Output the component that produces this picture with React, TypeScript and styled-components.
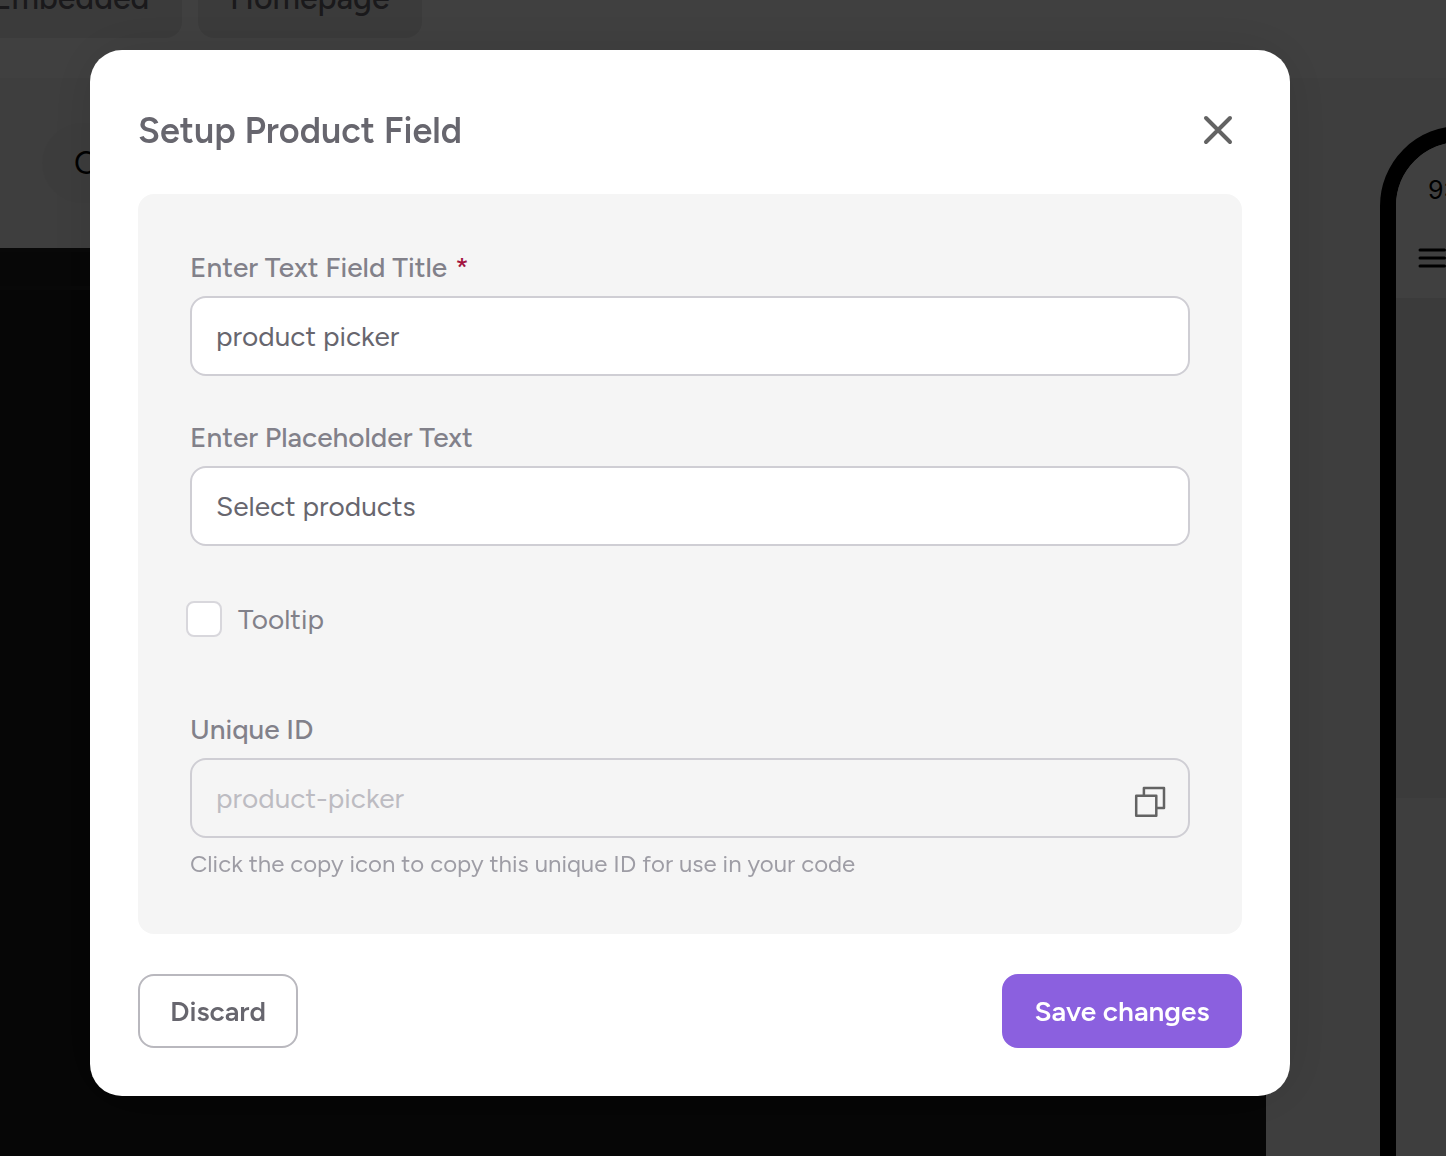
import React, { useState } from "react";
import styled, { createGlobalStyle } from "styled-components";

const GlobalStyle = createGlobalStyle`
  *, *::before, *::after { box-sizing: border-box; }
  html, body, #root { height: 100%; }
  body {
    margin: 0;
    overflow: hidden;
    font-family: Figtree, Lato, "Open Sans", sans-serif;
    color: #67666e;
  }
  button, input { font: inherit; color: inherit; }
`;

const Page = styled.div`
  height: 100vh;
  display: flex;
  flex-direction: column;
  overflow: hidden;
  background: #f5f5f5;
`;

const TopBar = styled.header`
  flex: none;
  height: 78px;
  display: flex;
  align-items: flex-end;
  gap: 16px;
  padding-bottom: 40px;
  margin-left: -40px;
  overflow: hidden;
  background: #ffffff;
`;

const Tab = styled.button`
  flex: none;
  height: 80px;
  min-width: 222px;
  padding: 0 32px;
  border: 0;
  border-radius: 16px;
  background: #ebebeb;
  font-size: 32px;
  font-weight: 500;
`;

const Workspace = styled.div`
  flex: 1;
  display: flex;
  min-height: 0;
`;

const Editor = styled.main`
  flex: 1;
  display: flex;
  flex-direction: column;
`;

const Toolbar = styled.div`
  height: 170px;
  display: flex;
  align-items: center;
  padding: 0 42px;
`;

const Pill = styled.button`
  height: 80px;
  min-width: 240px;
  padding: 0 32px;
  border: 0;
  border-radius: 40px;
  background: #f0f0f0;
  color: #000000;
  font-size: 32px;
  text-align: left;
`;

const Canvas = styled.div`
  flex: 1;
  background: #181818;
`;

const CanvasBar = styled.div`
  height: 42px;
  background: #1c1c1c;
  border-top: 4px solid #222222;
  border-bottom: 4px solid #222222;
`;

const Preview = styled.aside`
  width: 180px;
  padding: 48px 0 0 114px;
  overflow: hidden;
`;

const Phone = styled.div`
  width: 640px;
  height: 1300px;
  border: 16px solid #000000;
  border-radius: 80px;
  overflow: hidden;
  color: #000000;
`;

const PhoneTop = styled.div`
  height: 156px;
  padding: 30px 20px 20px;
  display: flex;
  flex-direction: column;
  gap: 36px;
  background: #ffffff;
`;

const Clock = styled.time`
  padding-left: 12px;
  font-family: Inter, sans-serif;
  font-size: 25px;
  line-height: 36px;
`;

const MenuIcon = styled.svg`
  display: block;
  width: 32px;
  height: 28px;
`;

const PhoneHero = styled.div`
  height: 500px;
  background: #ebebeb;
`;

const Overlay = styled.div`
  position: fixed;
  inset: 0;
  display: flex;
  align-items: flex-start;
  padding: 50px 156px 60px 90px;
  background: rgba(0, 0, 0, 0.75);
`;

const Dialog = styled.form`
  flex: 1;
  display: flex;
  flex-direction: column;
  padding: 48px;
  border-radius: 32px;
  background: #ffffff;
  box-shadow: 0 0 60px rgba(0, 0, 0, 0.12);
`;

const DialogHeader = styled.div`
  display: flex;
  align-items: center;
  justify-content: space-between;
  height: 64px;
  margin-bottom: 32px;
`;

const Title = styled.h1`
  margin: 0;
  font-size: 36px;
  line-height: 45px;
  font-weight: 600;
`;

const IconButton = styled.button`
  display: flex;
  align-items: center;
  justify-content: center;
  width: 48px;
  height: 48px;
  padding: 0;
  border: 0;
  background: none;
  color: #636363;
  cursor: pointer;
`;

const Panel = styled.div`
  padding: 52px;
  border-radius: 16px;
  background: #f5f5f5;
`;

const Field = styled.div`
  display: flex;
  flex-direction: column;
  gap: 8px;

  & + & { margin-top: 40px; }
`;

const Label = styled.label`
  font-size: 28px;
  line-height: 42px;
  font-weight: 500;
  color: #82818a;
`;

const Required = styled.span`
  margin-left: 8px;
  color: #a3143f;
`;

const InputBox = styled.div<{ $muted?: boolean }>`
  display: flex;
  align-items: center;
  height: 80px;
  padding: 0 14px 0 24px;
  border: 2px solid #cfced4;
  border-radius: 16px;
  background: ${(p) => (p.$muted ? "#f5f5f5" : "#ffffff")};
  color: ${(p) => (p.$muted ? "#bdbcc2" : "#67666e")};
`;

const TextInput = styled.input`
  flex: 1;
  min-width: 0;
  height: 100%;
  padding: 0;
  border: 0;
  outline: 0;
  background: transparent;
  font-size: 28px;
`;

const Hint = styled.p`
  margin: 0;
  font-size: 24px;
  line-height: 36px;
  color: #9e9da5;
`;

const CheckRow = styled.label`
  display: flex;
  align-items: center;
  gap: 16px;
  height: 36px;
  margin: 55px 0 71px -4px;
  font-size: 28px;
  color: #82818a;
`;

const Checkbox = styled.input`
  appearance: none;
  width: 36px;
  height: 36px;
  margin: 0;
  border: 2px solid #d8d7dc;
  border-radius: 8px;
  background: #ffffff;

  &:checked { background: #8b60df; }
`;

const Footer = styled.div`
  display: flex;
  justify-content: space-between;
  margin-top: 40px;
`;

const Button = styled.button<{ $primary?: boolean }>`
  height: 74px;
  min-width: ${(p) => (p.$primary ? "240px" : "160px")};
  padding: 0 24px;
  border: 2px solid ${(p) => (p.$primary ? "#8b60df" : "#b9b8be")};
  border-radius: 16px;
  background: ${(p) => (p.$primary ? "#8b60df" : "#ffffff")};
  color: ${(p) => (p.$primary ? "#ffffff" : "#67666e")};
  font-size: 28px;
  font-weight: 600;
  cursor: pointer;
`;

export default function App() {
  const [title, setTitle] = useState("product picker");
  const [placeholder, setPlaceholder] = useState("Select products");
  const [tooltip, setTooltip] = useState(false);

  return (
    <>
      <GlobalStyle />
      <Page>
        <TopBar>
          <Tab type="button">Embedded</Tab>
          <Tab type="button">Homepage</Tab>
        </TopBar>
        <Workspace>
          <Editor>
            <Toolbar>
              <Pill type="button">C</Pill>
            </Toolbar>
            <Canvas>
              <CanvasBar />
            </Canvas>
          </Editor>
          <Preview>
            <Phone>
              <PhoneTop>
                <Clock>9:41</Clock>
                <MenuIcon viewBox="0 0 32 28" fill="none" stroke="#000000" strokeWidth="3" strokeLinecap="round">
                  <path d="M4 6h24.500M4 14h24.500M4 22h24.500" />
                </MenuIcon>
              </PhoneTop>
              <PhoneHero />
            </Phone>
          </Preview>
        </Workspace>
      </Page>

      <Overlay>
        <Dialog role="dialog" aria-labelledby="dialog-title" onSubmit={(e) => e.preventDefault()}>
          <DialogHeader>
            <Title id="dialog-title">Setup Product Field</Title>
            <IconButton type="button" aria-label="Close">
              <svg width="32" height="32" viewBox="0 0 32 32" fill="none" stroke="currentColor" strokeWidth="4" strokeLinecap="round">
                <path d="M4 4L28 28M28 4L4 28" />
              </svg>
            </IconButton>
          </DialogHeader>

          <Panel>
            <Field>
              <Label htmlFor="field-title">
                Enter Text Field Title<Required>*</Required>
              </Label>
              <InputBox>
                <TextInput id="field-title" value={title} onChange={(e) => setTitle(e.target.value)} />
              </InputBox>
            </Field>
            <Field>
              <Label htmlFor="field-placeholder">Enter Placeholder Text</Label>
              <InputBox>
                <TextInput
                  id="field-placeholder"
                  value={placeholder}
                  onChange={(e) => setPlaceholder(e.target.value)}
                />
              </InputBox>
            </Field>

            <CheckRow>
              <Checkbox type="checkbox" checked={tooltip} onChange={(e) => setTooltip(e.target.checked)} />
              Tooltip
            </CheckRow>

            <Field>
              <Label htmlFor="field-id">Unique ID</Label>
              <InputBox $muted>
                <TextInput id="field-id" value="product-picker" readOnly />
                <IconButton type="button" aria-label="Copy unique ID">
                  <svg width="32" height="40" viewBox="0 0 32 40" fill="none" stroke="currentColor" strokeWidth="2.5" strokeLinejoin="round">
                    <path d="M2.200 17.700h20.100v20.100h-20.100zM9.900 17.700V10h20.100v20.100h-7.700" />
                  </svg>
                </IconButton>
              </InputBox>
              <Hint>Click the copy icon to copy this unique ID for use in your code</Hint>
            </Field>
          </Panel>

          <Footer>
            <Button type="button">Discard</Button>
            <Button type="submit" $primary>
              Save changes
            </Button>
          </Footer>
        </Dialog>
      </Overlay>
    </>
  );
}
